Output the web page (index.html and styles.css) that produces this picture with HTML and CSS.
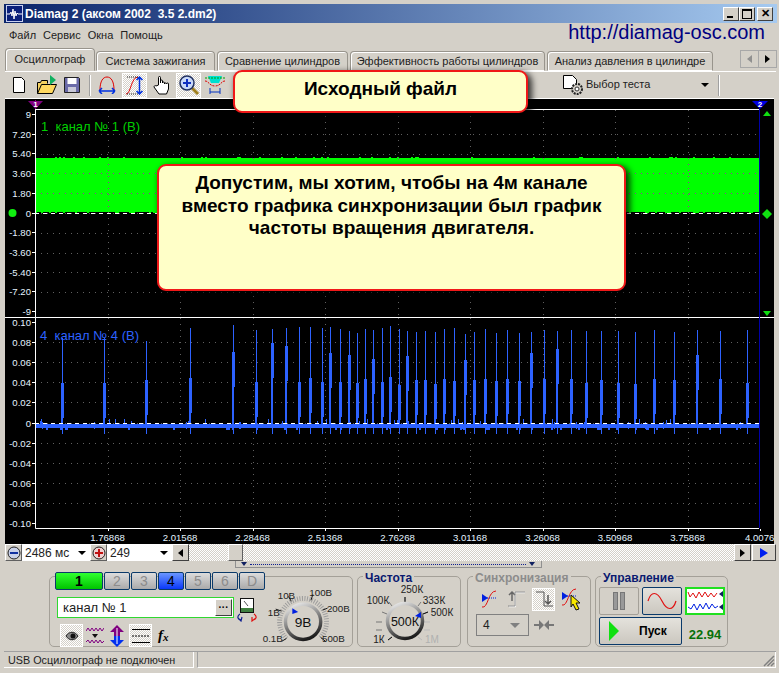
FILE: index.html
```html
<!DOCTYPE html>
<html lang="ru">
<head>
    <meta charset="UTF-8">
    <title>Diamag 2</title>
    <link rel="stylesheet" href="styles.css">
</head>
<body>
<div class="window">

    <!-- Заголовок окна -->
    <div class="titlebar">
        <svg class="app-icon" width="17" height="17" viewBox="0 0 17 17"><rect x="0.5" y="0.5" width="16" height="16" fill="#0a1f7a" stroke="#c8d0f0"/><path d="M1 9h3l1-2 1 4 1-7 1 10 1-8 1 5 1-3 1 1h4" fill="none" stroke="#fff"/></svg>
        <span class="title-text">Diamag 2 (аксом 2002&nbsp; 3.5 2.dm2)</span>
        <div class="title-buttons">
            <button class="title-btn"><i class="ico-min"></i></button>
            <button class="title-btn"><i class="ico-max"></i></button>
            <button class="title-btn title-close">✕</button>
        </div>
    </div>

    <div class="menubar">
        <span>Файл</span><span>Сервис</span><span>Окна</span><span>Помощь</span>
        <a class="site-link">http://diamag-osc.com</a>
    </div>

    <div class="tabs">
        <div class="tab tab-active">Осциллограф</div>
        <div class="tab tab-w2">Система зажигания</div>
        <div class="tab tab-w3">Сравнение цилиндров</div>
        <div class="tab tab-w4">Эффективность работы цилиндров</div>
        <div class="tab tab-w5">Анализ давления в цилиндре</div>
        <div class="tab-nav">
            <span class="nav-left"></span><span class="nav-right"></span>
        </div>
    </div>

    <!-- Панель инструментов -->
    <div class="toolbar">
        <svg class="tool t-new" width="16" height="18" viewBox="0 0 16 18"><path d="M2.500 1.500h8l3 3v12h-11z" fill="#fff" stroke="#000"/></svg>
        <svg class="tool t-open" width="22" height="20" viewBox="0 0 22 20"><path d="M1.500 18.500v-11h3l1-2h6v3" fill="#f4d060" stroke="#000"/><path d="M1.500 18.500l4-9h15l-4 9z" fill="#ffd860" stroke="#000"/><path d="M14 0l6 5-6 5z" fill="#10b060"/></svg>
        <svg class="tool t-save" width="16" height="16" viewBox="0 0 16 16"><path d="M.5.500h14l1 1v14H.5z" fill="#6a6aa8" stroke="#222"/><rect x="3.500" y="1" width="9" height="6" fill="#fff"/><rect x="4" y="10" width="8" height="5" fill="#c8c8d8"/></svg>
        <i class="tool-sep t-sep1"></i>
        <svg class="tool t-arch" width="18" height="18" viewBox="0 0 18 18"><path d="M2 14C2 5 5 1 9 1s7 4 7 13" fill="none" stroke="#e00000"/><path d="M1 15h16M1 15l3-3M1 15l3 3M17 15l-3-3M17 15l-3 3" stroke="#0030e0" stroke-width="1.500" fill="none"/></svg>
        <div class="tool-on t-on1"><svg width="22" height="22" viewBox="0 0 22 22"><path d="M2 20C7 20 7 3 14 3" fill="none" stroke="#e00000"/><path d="M3 3h11M3 20h14" stroke="#222" stroke-dasharray="1 1"/><path d="M15.500 3v17M12.500 6l3-3 3 3M12.500 17l3 3 3-3" stroke="#0030e0" stroke-width="1.500" fill="none"/></svg></div>
        <svg class="tool t-hand" width="18" height="20" viewBox="0 0 18 20"><path d="M5.500 10V2.500a1 1 0 0 1 2 0V8V6a1 1 0 0 1 2 0v2a1 1 0 0 1 2 0v1a1 1 0 0 1 2 0a1 1 0 0 1 2 0v5l-2 5H6l-5-7c0-1 1-2 2-1z" fill="#fff" stroke="#000"/></svg>
        <div class="tool-on t-on2"><svg width="22" height="22" viewBox="0 0 22 22"><path d="M13 13l7 7" stroke="#a08020" stroke-width="3"/><circle cx="9" cy="9" r="7" fill="#c8d8f8" stroke="#203060" stroke-width="1.500"/><path d="M5 9h8M9 5v8" stroke="#1030c0" stroke-width="2"/></svg></div>
        <svg class="tool t-multi" width="20" height="22" viewBox="0 0 20 22"><path d="M3 2h14l-3 7H6z" fill="#00e0d0"/><path d="M0 7c4 0 4 5 10 5s6-5 10-5" fill="none" stroke="#e00000" stroke-dasharray="2 1"/><path d="M0 4h20" stroke="#00a000" stroke-dasharray="2 1"/><path d="M5 14v6M15 14v6M5 18h10" stroke="#0030c0"/></svg>
        <svg class="tool t-test" width="22" height="22" viewBox="0 0 22 22"><path d="M1.500 1.500h9l4 4v9h-13z" fill="#fff" stroke="#000"/><circle cx="15" cy="15" r="5" fill="#d4d0c8" stroke="#222" stroke-dasharray="2 1" stroke-width="2"/><circle cx="15" cy="15" r="2" fill="#fff" stroke="#333"/></svg>
        <span class="test-label">Выбор теста</span>
        <i class="combo-arrow t-arrow"></i>
        <i class="tool-sep t-sep2"></i>
    </div>

    <!-- Графики, метки рисует script.js -->
    <svg id="scope" class="scope" width="769" height="446" viewBox="5 98 769 446"></svg>

    <div class="scrollrow">
        <button class="round-btn"><svg width="14" height="14" viewBox="0 0 14 14"><circle cx="7" cy="7" r="6" fill="#c8d0e8" stroke="#222"/><path d="M3 7h8" stroke="#1030a0" stroke-width="2"/></svg></button>
        <div class="combo combo-time">2486 мс<i class="combo-arrow"></i></div>
        <button class="round-btn"><svg width="14" height="14" viewBox="0 0 14 14"><circle cx="7" cy="7" r="6" fill="#f0d0d0" stroke="#222"/><path d="M3 7h8M7 3v8" stroke="#c01010" stroke-width="2"/></svg></button>
        <div class="combo combo-zoom">249<i class="combo-arrow"></i></div>
        <button class="scroll-btn"><i class="arr-left"></i></button>
        <div class="scroll-track"><div class="scroll-thumb"></div></div>
        <button class="scroll-btn"><i class="arr-right"></i></button>
        <button class="play-btn"><i class="arr-blue"></i></button>
    </div>

    <div class="grab-row"><div class="grab-strip"><i></i><span></span><i></i></div></div>

    <div class="panels">

        <!-- Каналы -->
        <div class="panel panel-channel">
            <div class="channel-left">
                <div class="channel-btns">
                    <button class="ch ch-green">1</button>
                    <button class="ch">2</button>
                    <button class="ch">3</button>
                    <button class="ch ch-blue">4</button>
                    <button class="ch">5</button>
                    <button class="ch">6</button>
                    <button class="ch">D</button>
                </div>
                <div class="channel-name">
                    <div class="name-input">канал № 1<button class="dots-btn">···</button></div>
                    <svg width="20" height="25" viewBox="0 0 20 25"><rect x="3.500" y="1.500" width="13" height="14" fill="#fff" stroke="#111"/><rect x="4" y="11" width="12" height="4" fill="#408040"/><path d="M7 4l4 5" stroke="#555"/><path d="M3 17c-3 2-3 5 1 6M1 21l3 3 1-4" fill="none" stroke="#102090" stroke-width="1.200"/><path d="M17 17c3 2 3 5-1 6M19 21l-4 3 0-4" fill="none" stroke="#e01010" stroke-width="1.200"/></svg>
                </div>
                <div class="channel-tools">
                    <div class="tool-on c-eye"><svg width="14" height="10" viewBox="0 0 14 10"><path d="M1 5c3-5 9-5 12 0c-3 5-9 5-12 0z" fill="#8a8a8a" stroke="#222"/><circle cx="8" cy="5" r="2.500" fill="#111"/></svg></div>
                    <svg class="c-wave" width="18" height="20" viewBox="0 0 18 20"><path d="M0 5l2-3 2 3 2-3 2 3 2-3 2 3 2-3 2 3 2-3M0 16l2-2 2 3 2-3 2 3 2-3 2 3 2-3 2 3 2-2" fill="none" stroke="#800080"/><path d="M6 8h6l-3 4z" fill="#111"/></svg>
                    <svg class="c-arrows" width="16" height="22" viewBox="0 0 16 22"><path d="M8 0l7 7h-4v4H5V7H1z" fill="#800080"/><path d="M5 11h6v4h4l-7 7-7-7h4z" fill="#0030f0"/><path d="M8 3v16" stroke="#fff"/></svg>
                    <div class="tool-on c-lines"><svg width="20" height="20" viewBox="0 0 20 20"><path d="M1 3.500h18M1 16.500h18" stroke="#000"/><path d="M1 10h18" stroke="#000" stroke-dasharray="2 1"/></svg></div>
                    <span class="c-fx">f<sub>x</sub></span>
                </div>
            </div>
            <svg class="dial dial-volt" width="92" height="62" viewBox="260 584 92 62">
                <path d="M285 639A24 24 0 1 1 319 639" fill="none" stroke="#9c9c9c" stroke-width="5" stroke-dasharray="1 1.500"/>
                <path d="M285 639l-5 3M280 611l-6-2M290 601l-3-5M310 600l2-6M322 610l5-2M320 638l5 4" stroke="#111"/>
                <circle cx="302" cy="622" r="18" fill="#d4d0c8" stroke="url(#ringGrad)" stroke-width="3.500"/>
                <path d="M291 608l6 4-6 2z" fill="#0020e0"/>
                <text class="dial-mid" x="302" y="627">9В</text>
                <text x="271" y="643">0.1В</text><text x="272" y="616">1В</text><text x="285" y="599">10В</text>
                <text x="320" y="596">100В</text><text x="338" y="612">200В</text><text x="333" y="643">500В</text>
            </svg>
        </div>

        <!-- Частота -->
        <div class="panel panel-freq">
            <div class="panel-title">Частота</div>
            <svg class="dial dial-freq" width="100" height="62" viewBox="358 584 100 62">
                <path d="M405 597v6M389 602l3 4M421 602l-3 4M382 612l5 2M428 612l-5 2M392 637l-4 3M376 622h6M376 630h6" stroke="#777"/>
                <path d="M405 597v6M392 637l-4 3M428 612l-5 2" stroke="#111"/>
                <path d="M418 637l4 3M430 622h-6M430 630h-6" stroke="#bbb"/>
                <circle cx="405" cy="621" r="17.500" fill="#d4d0c8" stroke="url(#ringGrad)" stroke-width="3.500"/>
                <path d="M421 612l-6 4 6 2z" fill="#0020e0"/>
                <text class="dial-mid mid-wide" x="405" y="626">500К</text>
                <text x="412" y="593">250К</text><text x="378" y="604">100К</text><text x="434" y="604">333К</text>
                <text x="442" y="616">500К</text><text x="379" y="643">1К</text><text class="dial-off" x="432" y="643">1М</text>
            </svg>
        </div>

        <!-- Синхронизация -->
        <div class="panel panel-sync">
            <div class="panel-title title-off">Синхронизация</div>
            <div class="sync-icons">
                <svg class="s-a" width="18" height="20" viewBox="0 0 18 20"><path d="M1 18c6 2 6-16 14-16" fill="none" stroke="#e01010"/><path d="M6 9h10" stroke="#0020e0" stroke-dasharray="1 1"/><path d="M1 5l6 4-6 4z" fill="#0020e0"/></svg>
                <svg class="s-b" width="18" height="20" viewBox="0 0 18 20"><path d="M1 17.500h6v-14h10" fill="none" stroke="#fff" stroke-width="1.500"/><path d="M4 3v9M1 6l3-3 3 3" fill="none" stroke="#666" stroke-width="1.500"/><path d="M0 17h7V3h10" fill="none" stroke="#888"/></svg>
                <div class="tool-on s-c"><svg width="20" height="20" viewBox="0 0 20 20"><path d="M2 3h8v14h9" fill="none" stroke="#555"/><path d="M14 6v9M11 12l3 3 3-3" fill="none" stroke="#555" stroke-width="1.500"/></svg></div>
                <svg class="s-d" width="22" height="24" viewBox="0 0 22 24"><path d="M1 18c6 2 6-16 14-16" fill="none" stroke="#e01010"/><path d="M6 9h10" stroke="#0020e0" stroke-dasharray="1 1"/><path d="M1 5l6 4-6 4z" fill="#0020e0"/><path d="M10 8l9 8h-4l3 6-3 1-3-6-2 3z" fill="#f8e800" stroke="#111"/></svg>
            </div>
            <div class="sync-row">
                <div class="combo-off">4<i class="combo-arrow"></i></div>
                <svg width="20" height="10" viewBox="0 0 20 10"><path d="M0 5h8M20 5h-8" stroke="#777" stroke-width="2"/><path d="M5 0l5 5-5 5zM15 0l-5 5 5 5z" fill="#777"/></svg>
            </div>
        </div>

        <!-- Управление -->
        <div class="panel panel-ctrl">
            <div class="panel-title">Управление</div>
            <div class="ctrl-grid">
                <button class="ctrl-btn ctrl-off"><svg width="12" height="18" viewBox="0 0 12 18"><rect x=".5" y=".5" width="4" height="17" fill="#999" stroke="#777"/><rect x="7.500" y=".5" width="4" height="17" fill="#999" stroke="#777"/></svg></button>
                <button class="ctrl-btn"><svg width="30" height="22" viewBox="0 0 30 22"><path d="M1 11C4 1 10 1 15 11s11 10 14 0" fill="none" stroke="#e01010" stroke-width="1.200"/></svg></button>
                <div class="ctrl-signal"><svg width="36" height="24" viewBox="0 0 36 24"><path d="M1 3l2 5 3-4 3 5 3-6 3 5 3-5 3 5 3-4 3 4 3-4" fill="none" stroke="#e01010"/><path d="M1 18l3 2 3-5 3 6 3-6 3 5 3-6 3 6 3-5 3 4 3-2" fill="none" stroke="#0020e0"/><path d="M36 2v6l-4-3zM36 15v6l-4-3z" fill="#102060"/></svg></div>
                <button class="ctrl-btn ctrl-start"><i class="start-tri"></i>Пуск</button>
                <div class="ctrl-value">22.94</div>
            </div>
        </div>
    </div>

    <div class="statusbar">
        <div class="status-pane pane-main">USB Осциллограф не подключен</div>
        <div class="status-pane pane-rest">
            <svg width="12" height="12" viewBox="0 0 12 12"><path d="M11 1L1 11M11 4.500L4.500 11M11 8L8 11" stroke="#808080" stroke-width="1.500"/></svg>
        </div>
    </div>

    <!-- Выноски поверх окна -->
    <div class="callout callout-file">Исходный файл</div>
    <div class="callout callout-note">Допустим, мы хотим, чтобы на 4м канале<br>вместо графика синхронизации был график<br>частоты вращения двигателя.</div>
</div>

<svg class="defs" width="0" height="0"><defs><linearGradient id="ringGrad" x1="0.200" y1="0" x2="0.600" y2="1"><stop offset="0" stop-color="#e8e8e8"/><stop offset="1" stop-color="#1c1c1c"/></linearGradient></defs></svg>
<script src="script.js"></script>
</body>
</html>
```

FILE: styles.css
```css
* {
    box-sizing: border-box;
}

body {
    margin: 0;
    width: 779px;
    height: 673px;
    overflow: hidden;
    background-color: #d4d0c8;
    font-family: "Liberation Sans", Arial, sans-serif;
    font-size: 11px;
    color: #222222;
}

button {
    font-family: inherit;
    padding: 0;
}

i {
    display: block;
}

.defs {
    display: block;
    height: 0;
}

.window {
    position: relative;
    height: 673px;
    padding: 4px 2px 0 4px;
}

/* Заголовок */
.titlebar {
    display: flex;
    align-items: center;
    height: 19px;
    padding-left: 2px;
    background: linear-gradient(90deg, #0a246a, #a6caf0);
    color: #ffffff;
}

.app-icon {
    margin-right: 2px;
}

.title-text {
    font-size: 12px;
    font-weight: bold;
}

.title-buttons {
    display: flex;
    margin-left: auto;
    margin-right: 4px;
}

.title-btn {
    width: 16px;
    height: 14px;
    background-color: #d4d0c8;
    border: 1px solid;
    border-color: #ffffff #404040 #404040 #ffffff;
    font-size: 11px;
    font-weight: bold;
    line-height: 11px;
    color: #000000;
    display: flex;
    align-items: center;
    justify-content: center;
}

.title-close {
    margin-left: 2px;
}

.ico-min {
    width: 6px;
    height: 2px;
    margin-top: 7px;
    margin-right: 3px;
    background-color: #000000;
}

.ico-max {
    width: 10px;
    height: 10px;
    border: 1px solid #000000;
    border-top-width: 2px;
}

/* Меню */
.menubar {
    display: flex;
    align-items: center;
    height: 23px;
    padding-left: 5px;
    gap: 7px;
    font-size: 11px;
}

.site-link {
    margin-left: auto;
    margin-right: 12px;
    margin-top: -5px;
    font-size: 20px;
    color: #000080;
}

/* Вкладки */
.tabs {
    display: flex;
    align-items: flex-end;
    height: 25px;
    padding-left: 1px;
    gap: 2px;
}

.tab {
    display: flex;
    align-items: center;
    justify-content: center;
    width: 119px;
    height: 20px;
    background-color: #d4d0c8;
    border: 1px solid #98948c;
    border-bottom-color: #ffffff;
    border-radius: 4px 4px 0 0;
    box-shadow: inset 1px 1px 0 #ffffff;
    font-size: 11px;
}

.tab-active {
    width: 90px;
    height: 23px;
    border-bottom-color: #d4d0c8;
    margin-right: -1px;
    padding-bottom: 2px;
}

.tab-w3 {
    width: 131px;
}

.tab-w4 {
    width: 195px;
}

.tab-w5 {
    width: 166px;
}

.tab-nav {
    display: flex;
    width: 37px;
    height: 18px;
    margin-left: 25px;
    margin-bottom: 3px;
    border: 1px solid #a8a8a8;
}

.tab-nav span {
    flex: 1;
    display: flex;
    align-items: center;
    justify-content: center;
}

.nav-left {
    border-right: 1px solid #a8a8a8;
}

.nav-left::before {
    content: "";
    border: 4px solid transparent;
    border-left-width: 0;
    border-right: 5px solid #909090;
}

.nav-right::before {
    content: "";
    border: 4px solid transparent;
    border-right-width: 0;
    border-left: 5px solid #000000;
}

/* Панель инструментов */
.toolbar {
    display: flex;
    align-items: center;
    height: 27px;
    margin-left: 1px;
    margin-right: 1px;
    border-top: 1px solid #ffffff;
    padding-left: 6px;
}

.tool-on {
    display: flex;
    align-items: center;
    justify-content: center;
    width: 25px;
    height: 25px;
    border: 1px solid #ffffff;
    background: repeating-conic-gradient(#ffffff 0 25%, #d4d0c8 0 50%) 0 0 / 2px 2px;
}

.tool-sep {
    width: 2px;
    height: 21px;
    background-color: #ffffff;
    border-left: 1px solid #a0a0a0;
}

.t-open { margin-left: 9px; }
.t-save { margin-left: 6px; }
.t-sep1 { margin-left: 9px; }
.t-arch { margin-left: 7px; }
.t-on1 { margin-left: 6px; }
.t-hand { margin-left: 6px; }
.t-on2 { margin-left: 5px; }
.t-multi { margin-left: 4px; }
.t-test { margin-left: 337px; }

.test-label {
    margin-left: 2px;
    margin-top: -2px;
    font-size: 11px;
}

.combo-arrow {
    width: 0;
    height: 0;
    border: 4px solid transparent;
    border-top: 4px solid #000000;
    border-bottom-width: 0;
}

.t-arrow { margin-left: 51px; }
.t-sep2 { margin-left: 9px; }

/* Графики */
.scope {
    display: block;
    margin-left: 1px;
    background-color: #000000;
    font-family: "Liberation Sans", Arial, sans-serif;
}

.axis-text {
    fill: #e4f4ff;
    font-size: 9.600px;
}

.channel-text {
    font-size: 13px;
    white-space: pre;
}

.mark-text {
    fill: #ffffff;
    font-size: 8px;
    font-weight: bold;
    text-anchor: middle;
}

/* Строка прокрутки */
.scrollrow {
    display: flex;
    height: 17px;
    margin-left: 1px;
    margin-right: 1px;
}

.round-btn {
    display: flex;
    align-items: center;
    justify-content: center;
    width: 17px;
    background-color: #d4d0c8;
    border: 1px solid;
    border-color: #ffffff #606060 #606060 #ffffff;
}

.combo {
    display: flex;
    align-items: center;
    justify-content: space-between;
    background-color: #ffffff;
    padding: 0 4px 0 3px;
    font-size: 12px;
}

.combo-time { width: 68px; }
.combo-zoom { width: 65px; }

.scroll-btn,
.play-btn {
    display: flex;
    align-items: center;
    justify-content: center;
    width: 17px;
    background-color: #d4d0c8;
    border: 1px solid;
    border-color: #ffffff #404040 #404040 #ffffff;
}

.play-btn {
    width: 24px;
    margin-left: 1px;
}

.arr-left {
    border: 4px solid transparent;
    border-left-width: 0;
    border-right: 5px solid #000000;
}

.arr-right {
    border: 4px solid transparent;
    border-right-width: 0;
    border-left: 5px solid #000000;
}

.arr-blue {
    border: 5px solid transparent;
    border-right-width: 0;
    border-left: 8px solid #0020f0;
}

.scroll-track {
    flex: 1;
    padding-left: 39px;
    background: repeating-conic-gradient(#ffffff 0 25%, #d4d0c8 0 50%) 0 0 / 2px 2px;
}

.scroll-thumb {
    width: 15px;
    height: 17px;
    background-color: #d4d0c8;
    border: 1px solid;
    border-color: #ffffff #606060 #606060 #ffffff;
}

.grab-row {
    height: 7px;
    padding-left: 231px;
}

.grab-strip {
    display: flex;
    align-items: center;
    gap: 3px;
    width: 307px;
    height: 7px;
    padding: 0 6px 0 5px;
    border: 1px solid #909090;
    border-top: 0;
}

.grab-strip i {
    border: 3px solid transparent;
    border-top: 4px solid #102060;
    border-bottom-width: 0;
}

.grab-strip span {
    flex: 1;
    border-top: 1px dotted #102090;
}

/* Нижние панели */
.panels {
    display: flex;
    gap: 4px;
    height: 71px;
    margin-top: 8px;
    padding-left: 45px;
}

.panel {
    height: 71px;
    border: 1px solid #a4a098;
    border-radius: 5px;
}

.panel-title {
    width: fit-content;
    margin: -6px 0 0 5px;
    padding: 0 2px;
    background-color: #d4d0c8;
    font-size: 12px;
    font-weight: bold;
    line-height: 14px;
    color: #0a1a70;
}

.title-off {
    color: #8c8c8c;
}

.panel-channel {
    display: flex;
    width: 304px;
}

.channel-left {
    width: 211px;
    padding-left: 5px;
}

.channel-btns {
    display: flex;
    gap: 1px;
    width: 211px;
    margin-top: -5px;
}

.ch {
    width: 26px;
    height: 18px;
    border: 1px solid #0a3a6a;
    border-radius: 2px;
    background: linear-gradient(#dcdcdc, #aaaaaa);
    font-size: 14px;
    color: #8c8c8c;
}

.ch-green {
    width: 48px;
    background: linear-gradient(#30ff30, #00c400);
    font-weight: bold;
    color: #000000;
}

.ch-blue {
    background: linear-gradient(#6a96ff, #0a38f8);
    color: #000000;
}

.channel-name {
    display: flex;
    gap: 3px;
    margin-top: 7px;
    margin-left: 2px;
}

.name-input {
    display: flex;
    align-items: center;
    justify-content: space-between;
    width: 177px;
    height: 21px;
    padding: 0 1px 0 5px;
    background-color: #ffffff;
    border: 1px solid #30d830;
    font-size: 13px;
}

.dots-btn {
    width: 17px;
    height: 17px;
    background-color: #d4d0c8;
    border: 1px solid;
    border-color: #ffffff #404040 #404040 #ffffff;
    font-weight: bold;
    font-size: 10px;
}

.channel-tools {
    display: flex;
    align-items: center;
    margin-top: 2px;
    margin-left: 5px;
}

.c-eye,
.c-lines {
    width: 23px;
    height: 23px;
}

.c-wave { margin-left: 3px; }
.c-arrows { margin-left: 5px; }
.c-lines { margin-left: 4px; }

.c-fx {
    margin-left: 6px;
    font-family: "Liberation Serif", serif;
    font-size: 15px;
    font-style: italic;
    font-weight: bold;
    color: #000000;
}

.c-fx sub {
    font-size: 11px;
    vertical-align: -1px;
}

.dial {
    display: block;
    font-size: 10px;
    text-anchor: middle;
}

.dial text {
    fill: #222222;
}

.dial .dial-mid {
    font-size: 14px;
    fill: #111111;
}

.dial .mid-wide {
    font-size: 12.500px;
}

.dial .dial-off {
    fill: #b0b0b0;
}

.dial-volt {
    margin-left: 1px;
    margin-top: 7px;
}

.panel-freq {
    width: 104px;
}

.dial-freq {
    margin-top: -1px;
}

.panel-sync {
    width: 124px;
    margin-left: 2px;
}

.sync-icons {
    display: flex;
    align-items: center;
    height: 24px;
    margin-top: 2px;
    padding-left: 13px;
}

.s-b { margin-left: 9px; }
.s-c { width: 23px; height: 23px; margin-left: 6px; }
.s-d { margin-left: 6px; }

.sync-row {
    display: flex;
    align-items: center;
    gap: 5px;
    margin-top: 3px;
    padding-left: 8px;
}

.combo-off {
    display: flex;
    align-items: center;
    justify-content: space-between;
    width: 53px;
    height: 22px;
    padding: 0 8px 0 6px;
    border: 1px solid #808080;
    font-size: 12px;
}

.combo-off .combo-arrow {
    border-top-color: #808080;
    border-width: 5px 5px 0;
}

.panel-ctrl {
    width: 133px;
}

.ctrl-grid {
    display: grid;
    grid-template-columns: 40px 40px 40px;
    grid-template-rows: 28px 28px;
    gap: 2px 3px;
    margin: 2px 0 0 3px;
}

.ctrl-btn {
    display: flex;
    align-items: center;
    justify-content: center;
    background: linear-gradient(#e4e2dc, #cbc7bf);
    border: 1px solid #0a3a6a;
    border-radius: 2px;
}

.ctrl-off {
    background: #d4d0c8;
    border-color: #a4a098;
}

.ctrl-signal {
    display: flex;
    align-items: center;
    justify-content: center;
    background-color: #ffffff;
    border: 2px solid #20e020;
}

.ctrl-start {
    grid-column: span 2;
    justify-content: flex-start;
    gap: 20px;
    padding-left: 9px;
    font-size: 12px;
    font-weight: bold;
    color: #000000;
}

.start-tri {
    border: 10px solid transparent;
    border-right-width: 0;
    border-left: 10px solid #10e010;
}

.ctrl-value {
    display: flex;
    align-items: center;
    justify-content: center;
    padding-top: 6px;
    font-size: 13px;
    font-weight: bold;
    color: #087008;
}

/* Статус */
.statusbar {
    display: flex;
    gap: 3px;
    height: 17px;
    margin-top: 4px;
    margin-right: 1px;
    border-top: 1px solid #a0a0a0;
}

.status-pane {
    display: flex;
    align-items: center;
    border-right: 1px solid #ffffff;
    border-bottom: 1px solid #ffffff;
    font-size: 10.800px;
}

.pane-main {
    width: 190px;
    padding-left: 4px;
}

.pane-rest {
    flex: 1;
    justify-content: flex-end;
    align-items: flex-end;
    border-left: 1px solid #a0a0a0;
}

/* Выноски */
.callout {
    position: absolute;
    display: flex;
    justify-content: center;
    text-align: center;
    font-weight: bold;
    color: #000000;
    background-color: #ffffc8;
    border: 2px solid #f01818;
    border-radius: 9px;
    box-shadow: 3px 3px 6px 1px rgba(0, 0, 0, 0.75);
}

.callout-file {
    left: 233px;
    top: 70px;
    width: 295px;
    height: 43px;
    padding-top: 6px;
    font-size: 19px;
}

.callout-note {
    left: 157px;
    top: 164px;
    width: 469px;
    height: 127px;
    padding-top: 6px;
    font-size: 19px;
    line-height: 22.500px;
}
```

FILE: script.js
```js
const scope = document.getElementById('scope');

// Простой генератор, чтобы шум был одинаковым при каждом запуске
let seed = 7;
function rnd() {
    seed = (seed * 16807) % 2147483647;
    return seed / 2147483647;
}

const LEFT = 35;
const RIGHT = 759;
const xTicks = ['1.76868', '2.01568', '2.28468', '2.51368', '2.76268', '3.01168', '3.26068', '3.50968', '3.75868', '4.0076'];

// [x, вершина, верх толстой части]
const spikes = [
    [62, 338, 383], [104, 338, 383], [146, 341, 380], [190, 328, 378], [233, 325, 352],
    [256, 330, 382], [272, 329, 343], [286, 328, 346], [299, 327, 382], [310, 327, 378],
    [322, 328, 382], [330, 327, 353], [340, 329, 382], [349, 331, 355], [357, 333, 383],
    [365, 329, 379], [373, 330, 359], [382, 328, 382], [390, 326, 377], [399, 329, 385],
    [407, 331, 356], [416, 332, 380], [425, 331, 380], [435, 332, 384], [444, 329, 379],
    [454, 328, 381], [465, 334, 360], [474, 332, 380], [485, 329, 379], [496, 333, 381],
    [507, 330, 379], [519, 333, 381], [531, 332, 353], [544, 330, 379], [557, 331, 349],
    [571, 330, 379], [586, 331, 383], [601, 331, 380], [618, 331, 383], [635, 332, 384],
    [654, 330, 379], [674, 332, 380], [697, 330, 355], [720, 331, 379], [747, 330, 383]
];

function rect(x, y, w, h) {
    return `M${x} ${y}h${w}v${h}h${-w}z`;
}

// Сетка: 10 делений по вертикали и деления времени по горизонтали
function grid(top, step, color) {
    let d = '';
    for (let i = 1; i < 10; i++) {
        const y = Math.round(top + i * step) + 0.5;
        d += `M${LEFT} ${y}H${RIGHT}`;
    }
    return `<path d="${d}" stroke="${color}" stroke-dasharray="1 5" fill="none"/>`;
}

function vgrid(y0, y1, color) {
    let d = '';
    for (let i = 1; i < 10; i++) {
        const x = Math.round(LEFT + i * 72.5) + 0.5;
        d += `M${x} ${y0}V${y1}`;
    }
    return `<path d="${d}" stroke="${color}" stroke-dasharray="1 5" fill="none"/>`;
}

function greenBand() {
    let d = '';
    for (let x = LEFT; x <= RIGHT - 2; x += 2) {
        if (rnd() > 0.9) {
            d += rect(x, 157, 2, 1);
        }
        if (rnd() > 0.7) {
            d += rect(x, 212, 2, 1);
        }
    }
    return `<rect x="${LEFT}" y="158" width="${RIGHT - LEFT}" height="54" fill="#00ff00"/><path d="${d}" fill="#00ff00"/>`;
}

function blueTrace() {
    let d = rect(LEFT, 424, RIGHT - LEFT, 4);
    for (let x = LEFT; x < RIGHT; x += 1) {
        const r = rnd();
        if (r > 0.93) {
            d += rect(x, 419 + Math.floor(rnd() * 4), 1, 7);
        } else if (r > 0.88) {
            d += rect(x, 428, 2, 2);
        }
    }
    spikes.forEach(([x, top, mid]) => {
        d += rect(x, top, 1, 426 - top);
        d += rect(x - 1, mid, 3, 426 - mid > 35 ? 35 : 426 - mid);
        d += rect(x - 1, mid + 35, 2, Math.max(0, 426 - mid - 35));
        d += rect(x, 428, 1, 6);
    });
    return `<path d="${d}" fill="#2d62ff"/>`;
}

function yLabels(top, step, labels) {
    let out = '';
    labels.forEach((text, i) => {
        const y = Math.round(top + i * step);
        out += `<path d="M32 ${y + 0.5}h3" stroke="#ffffff"/>`;
        out += `<text class="axis-text" x="31" y="${y + 4}" text-anchor="end">${text}</text>`;
    });
    return out;
}

let html = '<path d="M5 98.500H774" stroke="#ffffff"/>';

html += grid(114, 19.8, '#606060') + vgrid(110, 316, '#606060');
html += greenBand();
html += grid(114, 19.8, '#a030a0').replace('<path', '<path clip-path="url(#bandClip)"');
html += vgrid(110, 316, '#a030a0').replace('<path', '<path clip-path="url(#bandClip)"');
html += '<clipPath id="bandClip"><rect x="35" y="158" width="725" height="54"/></clipPath>';
html += `<path d="M${LEFT} 213.500H${RIGHT}" stroke="#ffffff" stroke-dasharray="4 4"/>`;
html += yLabels(114, 19.7, ['9', '7.20', '5.40', '3.60', '1.80', '0', '-1.80', '-3.60', '-5.40', '-7.20', '-9']);
html += '<text class="channel-text" x="41" y="131" fill="#00d000">1  канал № 1 (В)</text>';

html += grid(322, 20.1, '#606060') + vgrid(318, 528, '#606060');
html += blueTrace();
html += `<path d="M${LEFT} 423.500H${RIGHT}" stroke="#ffffff" stroke-dasharray="4 4"/>`;
html += yLabels(322, 20.1, ['0.10', '0.08', '0.06', '0.04', '0.02', '0', '-0.02', '-0.04', '-0.06', '-0.08', '-0.10']);
html += '<text class="channel-text" x="40" y="340" fill="#2d62ff">4  канал № 4 (В)</text>';

// Рамка, оси и маркеры каналов
html += `<path d="M${LEFT + 0.5} 109V528.500H${RIGHT}M${LEFT} 109.500H${RIGHT}M5 317.500H774" stroke="#ffffff" fill="none"/>`;
html += `<path d="M${LEFT + 0.5} 100V109" stroke="#800080"/>`;
html += '<path d="M759.500 100V528" stroke="#0000a8"/>';
html += '<path d="M28 101h15l-7.500 8z" fill="#800080"/><text class="mark-text" x="35.500" y="107">1</text>';
html += '<path d="M752 101h16l-8 8z" fill="#0000e0"/><text class="mark-text" x="760" y="107">2</text>';
html += '<circle cx="12.500" cy="213" r="4" fill="#10f010"/>';
html += '<path d="M767 209l5 5-5 5-5-5z" fill="#10e010"/>';
html += '<path d="M767 111l4 5h-8z" fill="#10e010"/><path d="M763 311h8l-4 5z" fill="#10e010"/>';

xTicks.forEach((text, i) => {
    const x = LEFT + (i + 1) * 72.5;
    html += `<path d="M${Math.round(x) + 0.5} 529v2" stroke="#ffffff"/>`;
    html += `<text class="axis-text" x="${x}" y="541" text-anchor="${i === 9 ? 'start' : 'middle'}" ${i === 9 ? 'dx="-15"' : ''}>${text}</text>`;
});

scope.innerHTML = html;
```
